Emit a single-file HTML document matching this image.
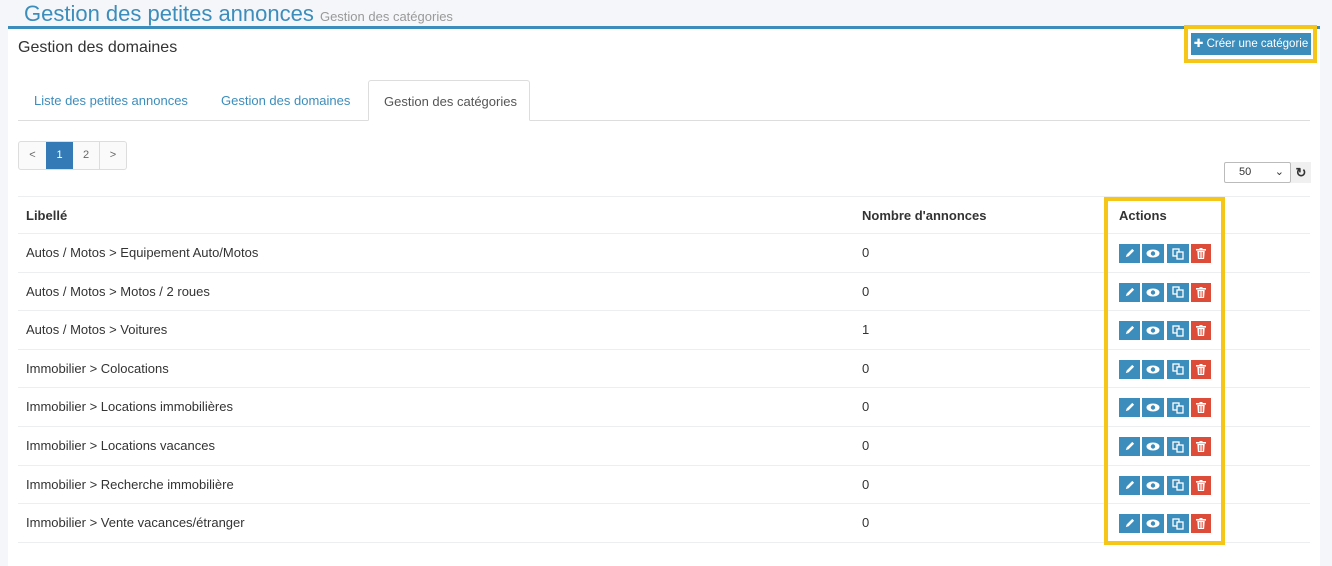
<!DOCTYPE html>
<html><head><meta charset="utf-8"><style>
*{box-sizing:border-box;margin:0;padding:0}
body{width:1332px;height:549px;overflow:hidden;background:#f4f6f9;font-family:"Liberation Sans",sans-serif;font-size:13px;color:#333;position:relative}
.abs{position:absolute}
.box{left:8px;top:26px;width:1312px;height:540px;background:#fff;border-top:3px solid #3c8dbc}
.t{white-space:nowrap}
.tab{top:80px;height:41px;padding:0 15px;line-height:41px;color:#3c8dbc}
.hr{left:18px;width:1292px;height:1px;background:#eceeef}
.btn{width:21px;height:19px;background:#3c8dbc;display:flex;align-items:center;justify-content:center}
.red{background:#dd4b39}
.yel{border:4px solid #f5c518}
</style></head><body>
<div class="abs t" style="left:24px;top:1px;font-size:22px;color:#3c8dbc">Gestion des petites annonces <span style="font-size:13px;color:#999">Gestion des catégories</span></div>
<div class="abs box"></div>
<div class="abs t" style="left:18px;top:39px;font-size:16px;color:#333">Gestion des domaines</div>
<div class="abs yel" style="left:1184px;top:25px;width:133px;height:38px"></div>
<div class="abs t" style="left:1191px;top:33px;width:120px;height:22px;background:#3c8dbc;color:#fff;font-size:11.5px;line-height:22px;text-align:center">✚ Créer une catégorie</div>
<div class="abs hr" style="top:120px;background:#ddd"></div>
<div class="abs tab t" style="left:19px">Liste des petites annonces</div>
<div class="abs tab t" style="left:206px">Gestion des domaines</div>
<div class="abs tab t" style="left:368px;width:162px;background:#fff;border:1px solid #ddd;border-bottom:1px solid #fff;color:#555;border-radius:3px 3px 0 0">Gestion des catégories</div>
<div class="abs" style="left:18px;top:141px;width:109px;height:29px;border:1px solid #ddd;border-radius:3px;display:flex;font-size:11px;line-height:27px;text-align:center;color:#666;background:#fafafa">
<div style="width:27px">&lt;</div><div style="width:27px;background:#337ab7;color:#fff">1</div><div style="width:27px;border-right:1px solid #ddd">2</div><div style="width:26px">&gt;</div></div>
<div class="abs" style="left:1224px;top:162px;width:67px;height:21px;border:1px solid #bbb;border-radius:2px;font-size:11px;line-height:19px;padding-left:14px">50<span style="position:absolute;right:6px;top:0">⌄</span></div>
<div class="abs" style="left:1291px;top:162px;width:20px;height:21px;background:#f0f0f0;font-weight:bold;text-align:center;line-height:21px;font-size:13px">↻</div>
<div class="abs hr" style="top:196px"></div>
<div class="abs t" style="left:26px;top:208px;font-weight:bold">Libellé</div>
<div class="abs t" style="left:862px;top:208px;font-weight:bold">Nombre d'annonces</div>
<div class="abs t" style="left:1119px;top:208px;font-weight:bold">Actions</div>
<div class="abs hr" style="top:233px"></div>
<div id="rows"></div>
<div class="abs yel" style="left:1104px;top:197px;width:121px;height:348px"></div>
<script>
var d=[["Autos / Motos > Equipement Auto/Motos",0],["Autos / Motos > Motos / 2 roues",0],["Autos / Motos > Voitures",1],["Immobilier > Colocations",0],["Immobilier > Locations immobilières",0],["Immobilier > Locations vacances",0],["Immobilier > Recherche immobilière",0],["Immobilier > Vente vacances/étranger",0]];
var h="";
var pen='<svg width="11" height="11" viewBox="0 0 12 12"><path d="M2 10l1-3 6-6 2 2-6 6z" fill="#fff"/></svg>';
var eye='<svg width="14" height="9" viewBox="0 0 14 9"><ellipse cx="7" cy="4.5" rx="6.5" ry="4" fill="#fff"/><circle cx="7" cy="4.5" r="2.2" fill="#3c8dbc"/></svg>';
var cp='<svg width="12" height="12" viewBox="0 0 12 12" fill="none" stroke="#fff" stroke-width="1.3"><rect x="1" y="1" width="6" height="7"/><rect x="5" y="4" width="6" height="7" fill="#3c8dbc"/></svg>';
var tr='<svg width="10" height="11" viewBox="0 0 10 11"><rect x="0" y="1" width="10" height="1.6" fill="#fff"/><rect x="3.5" y="0" width="3" height="1.5" fill="#fff"/><path d="M1.3 3h7.4l-.6 8H1.9z" fill="#fff"/><path d="M3.5 4v6M5 4v6M6.5 4v6" stroke="#dd4b39" stroke-width=".7"/></svg>';
for(var i=0;i<8;i++){var y=233+i*38.6;
h+='<div class="abs t" style="left:26px;top:'+(y+12)+'px">'+d[i][0].replace(">","&gt;")+'</div>';
h+='<div class="abs t" style="left:862px;top:'+(y+12)+'px">'+d[i][1]+'</div>';
h+='<div class="abs btn" style="left:1119px;top:'+(y+11)+'px">'+pen+'</div>';
h+='<div class="abs btn" style="left:1142px;top:'+(y+11)+'px;width:22px">'+eye+'</div>';
h+='<div class="abs btn" style="left:1167px;top:'+(y+11)+'px;width:22px">'+cp+'</div>';
h+='<div class="abs btn red" style="left:1191px;top:'+(y+11)+'px;width:20px">'+tr+'</div>';
h+='<div class="abs hr" style="top:'+Math.round(y+38.6)+'px"></div>';}
document.getElementById("rows").innerHTML=h;
</script>
</body></html>
